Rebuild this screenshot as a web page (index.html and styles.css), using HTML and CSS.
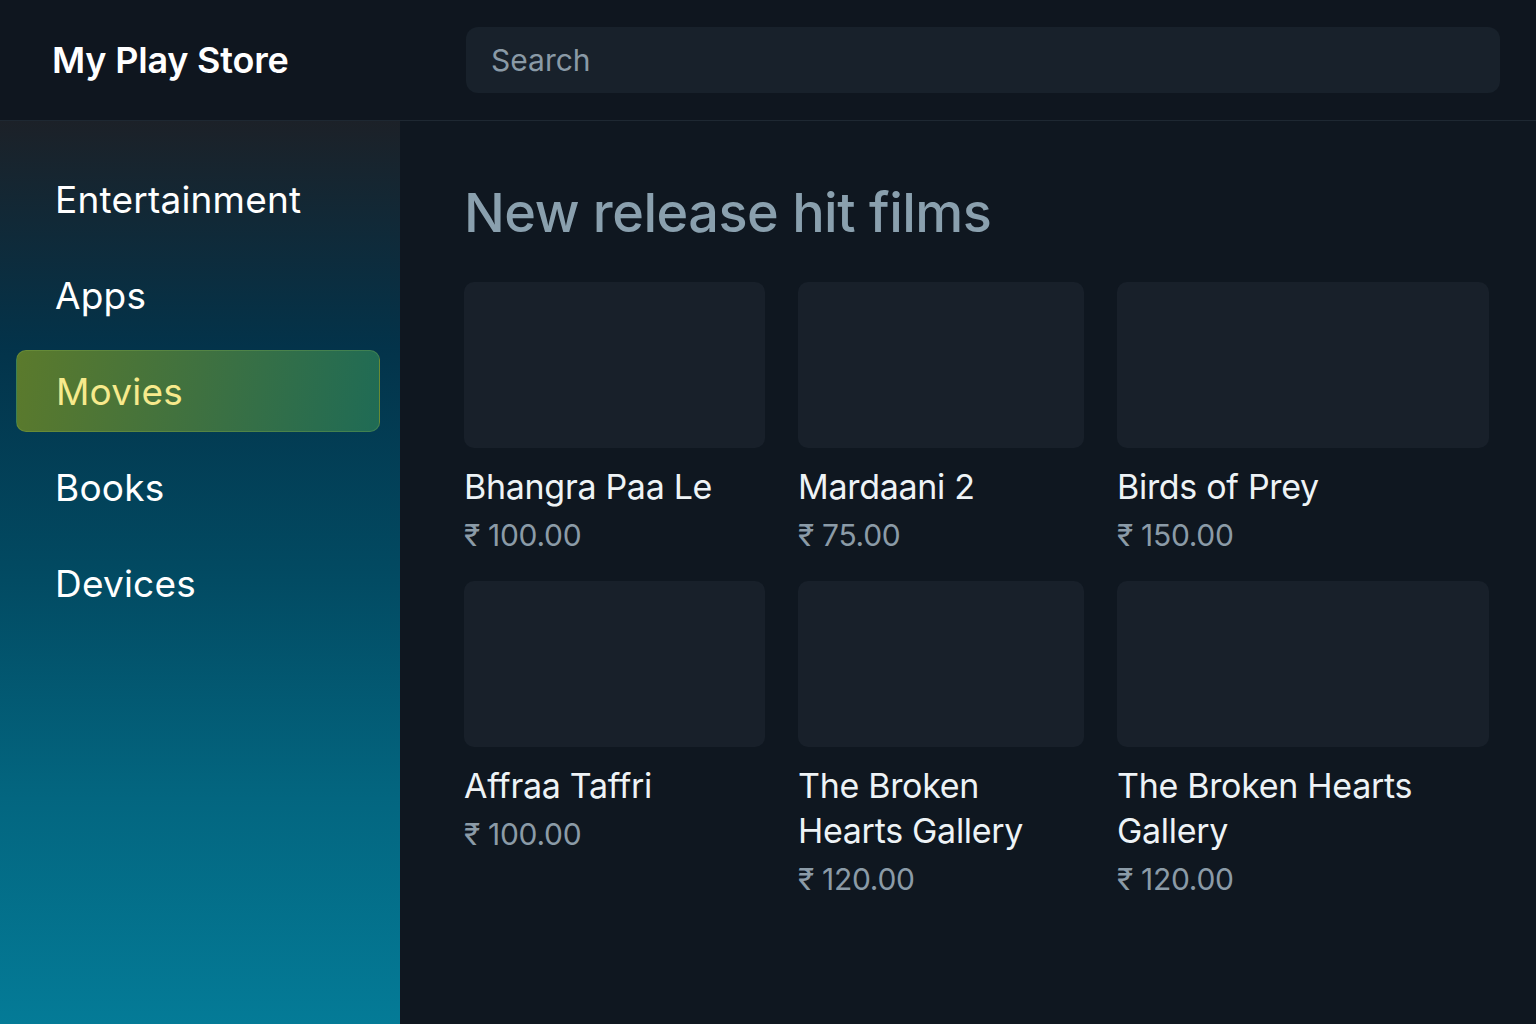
FILE: index.html
```html
<!DOCTYPE html>
<html lang="en">
<head>
<meta charset="utf-8">
<title>My Play Store</title>
<link rel="stylesheet" href="styles.css">
</head>
<body>
<header class="topbar">
  <div class="brand">My Play Store</div>
  <div class="search">Search</div>
</header>
<div class="layout">
  <nav class="sidebar">
    <a class="nav-item">Entertainment</a>
    <a class="nav-item">Apps</a>
    <a class="nav-item active">Movies</a>
    <a class="nav-item">Books</a>
    <a class="nav-item">Devices</a>
  </nav>
  <main class="main">
    <h1 class="heading">New release hit films</h1>
    <div class="grid">
      <div class="card"><div class="thumb"></div><div class="title">Bhangra Paa Le</div><div class="price">₹ 100.00</div></div>
      <div class="card"><div class="thumb"></div><div class="title">Mardaani 2</div><div class="price">₹ 75.00</div></div>
      <div class="card"><div class="thumb"></div><div class="title">Birds of Prey</div><div class="price">₹ 150.00</div></div>
      <div class="card"><div class="thumb"></div><div class="title">Affraa Taffri</div><div class="price">₹ 100.00</div></div>
      <div class="card"><div class="thumb"></div><div class="title">The Broken Hearts Gallery</div><div class="price">₹ 120.00</div></div>
      <div class="card"><div class="thumb"></div><div class="title">The Broken Hearts Gallery</div><div class="price">₹ 120.00</div></div>
    </div>
  </main>
</div>
</body>
</html>
```
FILE: styles.css
```css
* { box-sizing: border-box; }
html, body { margin: 0; padding: 0; }
body {
  width: 1536px;
  height: 1024px;
  overflow: hidden;
  background: #0f1720;
  font-family: Inter, "Noto Sans", sans-serif;
  color: #eef3f6;
}
.topbar {
  height: 121px;
  display: flex;
  align-items: center;
  padding: 0 36px 0 52px;
  background: #0f161f;
  border-bottom: 1px solid #1e2832;
}
.brand {
  width: 414px;
  font-size: 36px;
  font-weight: 600;
  color: #ffffff;
  letter-spacing: -0.2px;
}
.search {
  flex: 1;
  height: 66px;
  display: flex;
  align-items: center;
  padding-left: 25px;
  border-radius: 12px;
  background: #18212b;
  font-size: 30px;
  color: #8a9aa6;
}
.layout {
  display: grid;
  grid-template-columns: 400px 1fr;
  height: 903px;
}
.sidebar {
  display: flex;
  flex-direction: column;
  gap: 14px;
  padding: 37px 20px 0 16px;
  background: linear-gradient(180deg, #1c2128 0%, #03334a 25%, #024a62 50%, #036680 75%, #047b97 100%);
}
.nav-item {
  height: 82px;
  display: flex;
  align-items: center;
  padding-left: 39px;
  border-radius: 10px;
  font-size: 37px;
  color: #ffffff;
  letter-spacing: 0.2px;
}
.nav-item.active {
  background: linear-gradient(100deg, #5b7a2c 0%, #3f7140 50%, #1f6b55 100%);
  border: 1px solid rgba(150, 190, 80, 0.25);
  color: #f7ea8c;
}
.main {
  padding: 59px 48px 0 64px;
  background: #0f1720;
}
.heading {
  margin: 0 0 36px;
  font-size: 54px;
  line-height: 66px;
  font-weight: 500;
  color: #8aa0ae;
  letter-spacing: -0.5px;
}
.grid {
  display: grid;
  grid-template-columns: 301px 286px 372px;
  column-gap: 33px;
  row-gap: 24px;
  align-items: start;
}
.thumb {
  height: 166px;
  border-radius: 10px;
  background: #18202a;
}
.title {
  margin-top: 16px;
  font-size: 34px;
  line-height: 45px;
  color: #eef3f6;
  letter-spacing: -0.3px;
}
.price {
  margin-top: 4px;
  font-size: 30px;
  line-height: 44px;
  color: #8b9ba7;
  letter-spacing: -0.3px;
}
```
